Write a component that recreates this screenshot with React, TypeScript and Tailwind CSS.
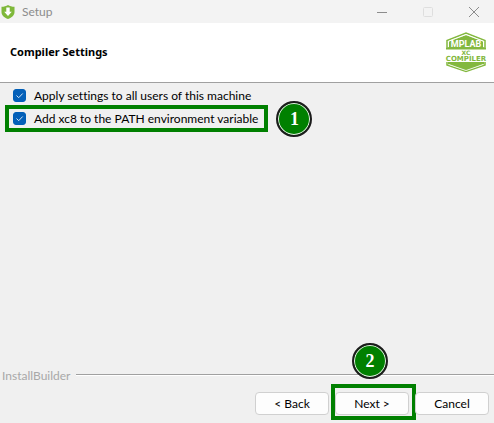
import { useState } from 'react';

function ShieldIcon() {
  return (
    <svg viewBox="0 0 14 14" className="h-[14px] w-[14px]" aria-hidden="true">
      <path d="M7 0C5.3 1.2 3 1.8.5 1.8V7c0 3.400 2.600 5.700 6.500 7 3.900-1.300 6.500-3.600 6.500-7V1.800C11 1.800 8.700 1.200 7 0Z" fill="#7fb83a" />
      <path d="M5.300 2.500h3.400v4.200h2.100L7 11 3.200 6.700h2.100Z" fill="#fff" />
    </svg>
  );
}

function CompilerLogo() {
  return (
    <svg viewBox="0 0 50 42" className="h-[42px] w-[50px]" role="img" aria-label="MPLAB XC Compiler">
      <path d="M6 16V8.500L25 1l19 7.500V16" fill="none" stroke="#83b83e" strokeWidth="1.500" />
      <path d="M8 15V9.500L25 3l17 6.500V15l3 1v1.500H5V16Z" fill="#83b83e" />
      <path d="M7 30h36v2l-18 6.500L7 32Z" fill="#83b83e" />
      <path d="M6 30v3l19 6.500L44 33v-3" fill="none" stroke="#83b83e" strokeWidth="1.500" />
      <path d="M8 32.500 25 38.500l17-6" fill="none" stroke="#fff" strokeWidth="0.700" />
      <path d="M7.500 9.200 25 2.600l17.500 6.600V15M7.500 9.200V15" fill="none" stroke="#fff" strokeWidth="0.700" />
      <text x="25" y="15" textAnchor="middle" fill="#fff" fontSize="9" fontWeight="700" fontFamily="Roboto, sans-serif">MPLAB</text>
      <text x="25" y="23" textAnchor="middle" fill="#83b83e" fontSize="6" fontWeight="700" fontFamily="DejaVu Sans, sans-serif">XC</text>
      <text x="25" y="29" textAnchor="middle" fill="#83b83e" fontSize="7" fontWeight="700" fontFamily="DejaVu Sans, sans-serif">COMPILER</text>
    </svg>
  );
}

function Highlight({ className }: { className: string }) {
  return <span className={`pointer-events-none absolute border-4 border-[#008000] ${className}`} />;
}

function StepBadge({ step, className }: { step: number; className: string }) {
  return (
    <span className={`absolute flex size-9 items-center justify-center rounded-full border-2 border-[#1c1c1c] bg-[#008000] font-['Liberation_Serif',serif] text-lg leading-none font-bold text-white ring-1 ring-inset ring-[#e6efe6] ${className}`}>
      {step}
    </span>
  );
}

function Option({ id, label, highlighted }: { id: string; label: string; highlighted?: boolean }) {
  const [checked, setChecked] = useState(true);
  return (
    <div className="relative flex h-[23px] items-center gap-2 pr-2.5 pl-[13px]">
      <span className="grid size-[13px]">
        <input
          id={id}
          type="checkbox"
          checked={checked}
          onChange={(e) => setChecked(e.target.checked)}
          className="col-start-1 row-start-1 size-[13px] appearance-none rounded-[3px] border border-[#005fb8] bg-white checked:bg-[#0560b8]"
        />
        {checked && (
          <svg viewBox="0 0 13 13" className="pointer-events-none col-start-1 row-start-1 size-[13px]" aria-hidden="true">
            <path d="m3.500 6.500 2.200 2.200 4-4.200" fill="none" stroke="#d5e6f6" strokeWidth="1" />
          </svg>
        )}
      </span>
      <label htmlFor={id} className="whitespace-nowrap">{label}</label>
      {highlighted && (
        <>
          <Highlight className="-inset-y-0.5 right-0 left-[5px]" />
          <StepBadge step={1} className="-top-1.5 left-full ml-2" />
        </>
      )}
    </div>
  );
}

function WizardButton({ label, step }: { label: string; step?: number }) {
  return (
    <div className="relative">
      <button type="button" className="block h-[23px] w-[74px] rounded-[4px] border border-[#d0d0d0] bg-[#fdfdfd] leading-5">
        {label}
      </button>
      {step && (
        <>
          <Highlight className="-top-2 -right-[7px] -bottom-[5px] -left-1" />
          <StepBadge step={step} className="bottom-full left-[17px] mb-[13px]" />
        </>
      )}
    </div>
  );
}

export default function App() {
  return (
    <div className="flex min-h-screen flex-col bg-[#f0f0f0] font-['Lato','Open_Sans',sans-serif] text-xs text-black [font-variant-ligatures:none]">
      <header className="flex h-[23px] items-center justify-between bg-[#f3f3f3] pr-[15px] pl-px">
        <div className="flex items-center gap-[7px] text-[#8c8c8c]">
          <ShieldIcon />
          <span>Setup</span>
        </div>
        <div className="flex items-center gap-9 text-[#8c8c8c]">
          <button type="button" aria-label="Minimize">
            <svg viewBox="0 0 10 10" className="size-[10px]"><path d="M0 5.500h10" stroke="currentColor" /></svg>
          </button>
          <button type="button" aria-label="Maximize" className="text-[#dedede]">
            <svg viewBox="0 0 10 10" className="size-[10px]"><rect x=".5" y=".5" width="9" height="9" rx="1" fill="none" stroke="currentColor" /></svg>
          </button>
          <button type="button" aria-label="Close">
            <svg viewBox="0 0 10 10" className="size-[10px]"><path d="m0 0 10 10M10 0 0 10" stroke="currentColor" /></svg>
          </button>
        </div>
      </header>

      <div className="flex h-[60px] items-center justify-between border-b border-[#a0a0a0] bg-white pr-[3px] pl-2.5">
        <h1 className="font-['Noto_Sans','Open_Sans',sans-serif] text-[11px] font-bold">Compiler Settings</h1>
        <CompilerLogo />
      </div>

      <main className="flex flex-1 flex-col items-start pt-px">
        <Option id="all-users" label="Apply settings to all users of this machine" />
        <Option id="add-path" label="Add xc8 to the PATH environment variable" highlighted />
      </main>

      <footer>
        <div className="flex h-4 items-center gap-1.5 pl-0.5 text-[#a8a8a8]">
          <span>InstallBuilder</span>
          <span className="mb-0.5 h-0.5 flex-1 border-t border-[#a0a0a0] bg-white" />
        </div>
        <div className="flex justify-end gap-1.5 pt-2 pr-[5px] pb-2">
          <WizardButton label="< Back" />
          <WizardButton label="Next >" step={2} />
          <WizardButton label="Cancel" />
        </div>
      </footer>
    </div>
  );
}
